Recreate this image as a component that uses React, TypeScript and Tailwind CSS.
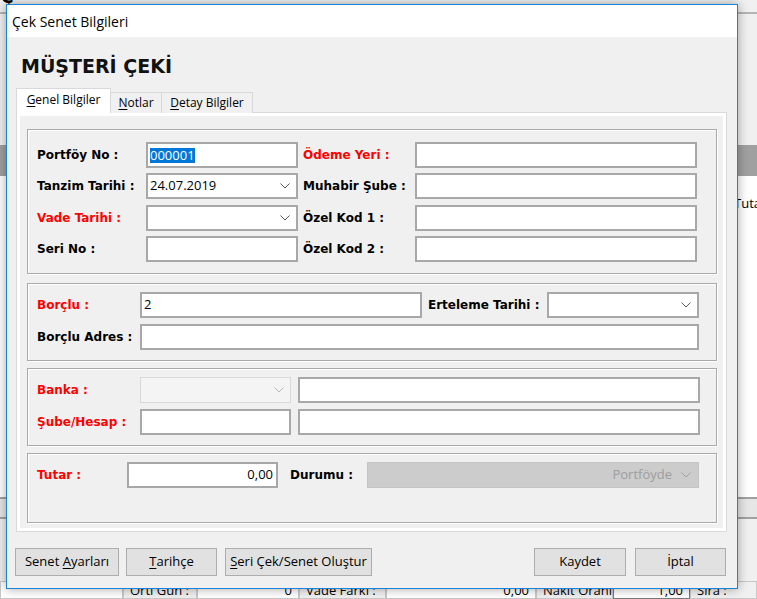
import React from 'react';

const ui = "font-['Open_Sans',sans-serif]";
const bold = "font-['DejaVu_Sans',sans-serif] font-bold text-[12px]";

function Chevron({color = '#5a5a5a'}: {color?: string}) {
  return (
    <svg width="10" height="6" viewBox="0 0 10 6" className="shrink-0">
      <polyline points="0.5,0.5 5,5 9.5,0.5" fill="none" stroke={color} strokeWidth="1" />
    </svg>
  );
}

function Label({children, red, className = ''}: {children: React.ReactNode; red?: boolean; className?: string}) {
  return (
    <div className={`${bold} shrink-0 whitespace-nowrap ${red ? 'text-[#ff0000]' : 'text-black'} ${className}`}>
      {children}
    </div>
  );
}

function TextBox({className = '', children, right}: {className?: string; children?: React.ReactNode; right?: boolean}) {
  return (
    <div
      className={`h-[26px] shrink-0 border-2 border-[#a8a8a8] bg-white flex items-center px-[2px] text-[13px] text-black ${ui} ${right ? 'justify-end pr-[3px]' : ''} ${className}`}
    >
      {children}
    </div>
  );
}

function Combo({className = '', value, disabled}: {className?: string; value?: string; disabled?: boolean}) {
  return (
    <div
      className={`h-[26px] shrink-0 flex items-center pl-[2px] pr-[6px] text-[13px] ${ui} ${
        disabled ? 'border border-[#d9d9d9] bg-[#f4f4f4]' : 'border-2 border-[#a8a8a8] bg-white text-black'
      } ${className}`}
    >
      <span className="flex-1">{value}</span>
      <Chevron color={disabled ? '#b8b8b8' : '#5a5a5a'} />
    </div>
  );
}

function Group({className = '', children}: {className?: string; children: React.ReactNode}) {
  return (
    <div className={`w-[690px] shrink-0 border border-[#a9a9a9] shadow-[inset_1px_1px_0_#ffffff,1px_1px_0_#ffffff] pl-[9px] ${className}`}>
      {children}
    </div>
  );
}

function Btn({className = '', children}: {className?: string; children: React.ReactNode}) {
  return (
    <button className={`h-[28px] shrink-0 border border-[#adadad] bg-[#e1e1e1] text-[13px] text-black ${ui} flex items-center justify-center ${className}`}>
      <span className="whitespace-pre">{children}</span>
    </button>
  );
}

function u(ch: string) {
  return <span className="underline underline-offset-2 decoration-1">{ch}</span>;
}

export default function App() {
  return (
    <div className={`relative w-[757px] h-[599px] overflow-hidden bg-[#f0f0f0] ${ui}`}>
      {/* application behind the dialog */}
      <div className="absolute inset-0 flex flex-col">
        <div className="h-[12px] bg-[#f0f0f0]" />
        <div className="h-[2px] bg-[#b4b4b4]" />
        <div className="h-[131px] bg-[#f0f0f0]" />
        <div className="h-[31px] bg-[#a0a0a0]" />
        <div className="h-[321px] bg-white" />
        <div className="h-[2px] bg-[#a0a0a0]" />
        <div className="h-[18px] bg-[#e6e6e6]" />
        <div className="h-[2px] bg-[#a0a0a0]" />
        <div className="h-[62px] bg-[#f0f0f0]" />
        <div className="h-[18px] flex text-[13px] text-black leading-[16px] whitespace-nowrap">
          <div className="w-[123px] shrink-0 border border-[#c8c8c8] bg-white" />
          <div className="w-[74px] shrink-0 pl-[6px] border border-[#c8c8c8]">Ortl Gün :</div>
          <div className="w-[102px] shrink-0 pr-[6px] text-right border border-[#c8c8c8] bg-white">0</div>
          <div className="w-[87px] shrink-0 pl-[6px] border border-[#c8c8c8]">Vade Farkı :</div>
          <div className="w-[150px] shrink-0 pr-[6px] text-right border border-[#c8c8c8] bg-white">0,00</div>
          <div className="w-[77px] shrink-0 pl-[6px] border border-[#c8c8c8] overflow-hidden">Nakit Oranı :</div>
          <div className="w-[77px] shrink-0 pr-[6px] text-right border border-[#7a7a7a] bg-white">1,00</div>
          <div className="w-[67px] shrink-0 pl-[6px] border border-[#c8c8c8]">Sıra :</div>
        </div>
      </div>
      <div className="absolute left-[1px] top-[-15px] font-['DejaVu_Sans',sans-serif] font-bold text-[17px] text-black">Ç</div>
      <div className="absolute left-[734px] top-[194px] text-[13px] text-black">Tutar</div>

      {/* dialog window */}
      <div className="absolute left-[6px] top-[4px] w-[732px] h-[585px] border border-[#1883d7] bg-[#f0f0f0] shadow-[0_0_10px_rgba(0,0,0,0.35)] flex flex-col">
        <div className="h-[32px] shrink-0 bg-white flex items-center pl-[5px] text-[14px] text-black">Çek Senet Bilgileri</div>

        <div className="h-[24px] mt-[17px] pl-[14px] flex items-center font-['DejaVu_Sans',sans-serif] font-bold text-[19px] text-[#111111]">
          MÜŞTERİ ÇEKİ
        </div>

        {/* tabs */}
        <div className="ml-[9px] mt-[10px] h-[25px] flex items-end text-[12px] text-black relative z-10">
          <div className="w-[95px] h-[25px] border border-b-0 border-[#d9d9d9] bg-white flex items-center justify-center pb-[2px]">
            <span>{u('G')}enel Bilgiler</span>
          </div>
          <div className="w-[51px] h-[21px] border border-l-0 border-b-0 border-[#d9d9d9] bg-[#f0f0f0] flex items-center justify-center">
            <span>{u('N')}otlar</span>
          </div>
          <div className="w-[91px] h-[21px] border border-l-0 border-b-0 border-[#d9d9d9] bg-[#f0f0f0] flex items-center justify-center">
            <span>{u('D')}etay Bilgiler</span>
          </div>
        </div>

        {/* tab page */}
        <div className="ml-[9px] mt-[-1px] w-[711px] h-[420px] shrink-0 border border-[#d9d9d9] bg-white p-[3px]">
          <div className="h-full bg-[#f0f0f0] pt-[13px] pl-[7px] flex flex-col">
            <Group className="h-[145px] pt-[12px] flex flex-col gap-[5px]">
              <div className="flex items-center">
                <Label className="w-[109px]">Portföy No :</Label>
                <TextBox className="w-[152px]">
                  <span className="bg-[#0078d7] text-white leading-[15px]">000001</span>
                </TextBox>
                <Label red className="ml-[5px] w-[112px]">Ödeme Yeri :</Label>
                <TextBox className="w-[282px]" />
              </div>
              <div className="flex items-center">
                <Label className="w-[109px]">Tanzim Tarihi :</Label>
                <Combo className="w-[152px]" value="24.07.2019" />
                <Label className="ml-[5px] w-[112px]">Muhabir Şube :</Label>
                <TextBox className="w-[282px]" />
              </div>
              <div className="flex items-center mt-[1px]">
                <Label red className="w-[109px]">Vade Tarihi :</Label>
                <Combo className="w-[152px]" />
                <Label className="ml-[5px] w-[112px]">Özel Kod 1 :</Label>
                <TextBox className="w-[282px]" />
              </div>
              <div className="flex items-center">
                <Label className="w-[109px]">Seri No :</Label>
                <TextBox className="w-[152px]" />
                <Label className="ml-[5px] w-[112px]">Özel Kod 2 :</Label>
                <TextBox className="w-[282px]" />
              </div>
            </Group>

            <Group className="mt-[9px] h-[78px] pt-[8px] flex flex-col gap-[6px]">
              <div className="flex items-center">
                <Label red className="w-[103px]">Borçlu :</Label>
                <TextBox className="w-[282px]">2</TextBox>
                <Label className="ml-[6px] w-[119px]">Erteleme Tarihi :</Label>
                <Combo className="w-[152px]" />
              </div>
              <div className="flex items-center">
                <Label className="w-[103px]">Borçlu Adres :</Label>
                <TextBox className="w-[559px]" />
              </div>
            </Group>

            <Group className="mt-[7px] h-[78px] pt-[8px] flex flex-col gap-[6px]">
              <div className="flex items-center">
                <Label red className="w-[103px]">Banka :</Label>
                <Combo disabled className="w-[151px]" />
                <TextBox className="ml-[7px] w-[402px]" />
              </div>
              <div className="flex items-center">
                <Label red className="w-[103px]">Şube/Hesap :</Label>
                <TextBox className="w-[151px]" />
                <TextBox className="ml-[7px] w-[402px]" />
              </div>
            </Group>

            <Group className="mt-[7px] h-[70px] pt-[8px]">
              <div className="flex items-center">
                <Label red className="w-[90px]">Tutar :</Label>
                <TextBox right className="w-[151px]">0,00</TextBox>
                <Label className="ml-[12px] w-[77px]">Durumu :</Label>
                <div className="w-[332px] h-[26px] border border-[#c4c4c4] bg-[#cccccc] flex items-center justify-end gap-[9px] pr-[7px] text-[13px] text-[#9d9d9d]">
                  <span>Portföyde</span>
                  <Chevron color="#a0a0a0" />
                </div>
              </div>
            </Group>
          </div>
        </div>

        {/* buttons */}
        <div className="mt-[16px] flex">
          <Btn className="ml-[8px] w-[104px]">Senet {u('A')}yarları</Btn>
          <Btn className="ml-[7px] w-[91px]">{u('T')}arihçe</Btn>
          <Btn className="ml-[8px] w-[147px]">{u('S')}eri Çek/Senet Oluştur</Btn>
          <Btn className="ml-auto w-[92px]">Kaydet</Btn>
          <Btn className="ml-[9px] mr-[11px] w-[91px]">İptal</Btn>
        </div>
      </div>
    </div>
  );
}
